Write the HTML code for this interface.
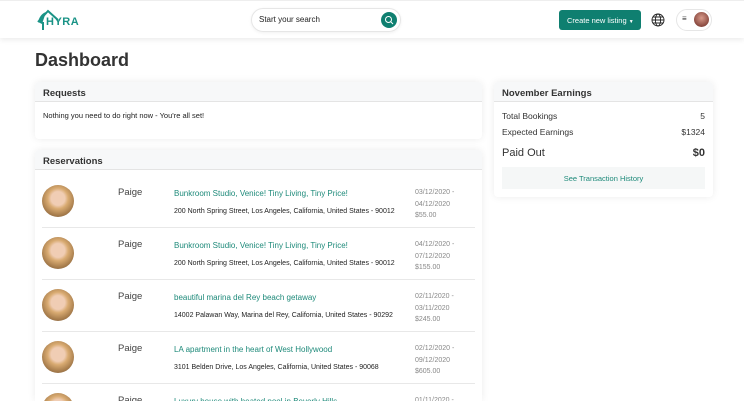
<!DOCTYPE html>
<html><head><style>
*{box-sizing:border-box;margin:0;padding:0}
html,body{width:744px;height:401px;overflow:hidden}
body{background:#fff;font-family:"Liberation Sans",sans-serif;color:#222;position:relative}
.hdr{position:absolute;left:0;top:0;width:744px;height:38px;background:#fff;box-shadow:0 2px 5px rgba(0,0,0,.08);border-top:1px solid #eee}
.abs{position:absolute}
.card{position:absolute;background:#fff;border-radius:4px;box-shadow:0 0 8px rgba(0,0,0,.08);overflow:hidden}
.ch{height:20px;background:#f7f8f9;border-bottom:1px solid #e4e4e4;font-size:9.5px;font-weight:bold;color:#333;padding:6px 8px 0}
.row{position:absolute;left:7px;width:433px;height:52px;border-bottom:1px solid #e8e8e8}
.av{position:absolute;left:0;top:9px;width:32px;height:32px;border-radius:50%;background:radial-gradient(circle at 50% 42%,#f0cdb4 0 28%,#d9ab72 42%,#a47a4a 70%,#6a5a50 100%)}
.nm{position:absolute;left:76px;top:11px;font-size:9.5px;color:#444}
.tt{position:absolute;left:132px;top:13px;font-size:8px;color:#1e8a7a}
.ad{position:absolute;left:132px;top:32px;font-size:7px;color:#222}
.dt{position:absolute;left:373px;top:11px;font-size:7px;color:#888;line-height:11.5px}
.er{position:absolute;left:8px;right:8px;font-size:8.5px;color:#333;display:flex;justify-content:space-between}
</style></head><body>
<div class="hdr">
 <svg class="abs" style="left:36px;top:7px" width="24" height="24" viewBox="0 0 24 24"><path d="M2 14 L12 3 L22 12" fill="none" stroke="#1a9386" stroke-width="2"/><path d="M2 14 Q4 6 10 4 L6 16 Z" fill="#1a9386"/><rect x="6" y="14" width="2" height="8" fill="#1a9386"/></svg>
 <div class="abs" style="left:46px;top:15px;font-size:11px;font-weight:bold;color:#1a9386;letter-spacing:.5px">HYRA</div>
 <div class="abs" style="left:251px;top:7px;width:150px;height:24px;border:1px solid #e6e6e6;border-radius:12px;box-shadow:0 1px 3px rgba(0,0,0,.06)"></div>
 <div class="abs" style="left:259px;top:14px;font-size:8px;color:#222">Start your search</div>
 <div class="abs" style="left:381px;top:11px;width:16px;height:16px;border-radius:50%;background:#0f7f70"></div>
 <svg class="abs" style="left:384px;top:14px" width="10" height="10" viewBox="0 0 10 10"><circle cx="4.5" cy="4.5" r="3" fill="none" stroke="#fff" stroke-width="1"/><path d="M6.7 6.7 L9 9" stroke="#fff" stroke-width="1"/></svg>
 <div class="abs" style="left:559px;top:9px;width:82px;height:20px;background:#0f7f70;border-radius:3px;color:#fff;font-size:7.5px;padding:6px 0 0 8px">Create new listing <span style="font-size:5px">▼</span></div>
 <svg class="abs" style="left:651px;top:12px" width="14" height="14" viewBox="0 0 14 14" fill="none" stroke="#222" stroke-width=".9"><circle cx="7" cy="7" r="6"/><ellipse cx="7" cy="7" rx="2.6" ry="6"/><path d="M1 7h12M2 4h10M2 10h10"/></svg>
 <div class="abs" style="left:676px;top:8px;width:36px;height:22px;border:1px solid #e6e6e6;border-radius:11px"></div>
 <div class="abs" style="left:682px;top:13px;font-size:8px;color:#333">≡</div>
 <div class="abs" style="left:694px;top:11px;width:15px;height:15px;border-radius:50%;background:radial-gradient(circle at 50% 40%,#d89a8a,#8a4a40 70%)"></div>
</div>
<div class="abs" style="left:35px;top:50px;font-size:18px;font-weight:bold;color:#333">Dashboard</div>
<div class="card" style="left:35px;top:82px;width:447px;height:57px"><div class="ch">Requests</div><div style="font-size:7.5px;padding:9px 8px;color:#222">Nothing you need to do right now - You're all set!</div></div>
<div class="card" style="left:35px;top:150px;width:447px;height:251px;border-radius:4px 4px 0 0"><div class="ch">Reservations</div>
 <div class="row" style="top:26px"><div class="av"></div><div class="nm">Paige</div><div class="tt">Bunkroom Studio, Venice! Tiny Living, Tiny Price!</div><div class="ad">200 North Spring Street, Los Angeles, California, United States - 90012</div><div class="dt">03/12/2020 -<br>04/12/2020<br>$55.00</div></div>
 <div class="row" style="top:78px"><div class="av"></div><div class="nm">Paige</div><div class="tt">Bunkroom Studio, Venice! Tiny Living, Tiny Price!</div><div class="ad">200 North Spring Street, Los Angeles, California, United States - 90012</div><div class="dt">04/12/2020 -<br>07/12/2020<br>$155.00</div></div>
 <div class="row" style="top:130px"><div class="av"></div><div class="nm">Paige</div><div class="tt">beautiful marina del Rey beach getaway</div><div class="ad">14002 Palawan Way, Marina del Rey, California, United States - 90292</div><div class="dt">02/11/2020 -<br>03/11/2020<br>$245.00</div></div>
 <div class="row" style="top:182px"><div class="av"></div><div class="nm">Paige</div><div class="tt">LA apartment in the heart of West Hollywood</div><div class="ad">3101 Belden Drive, Los Angeles, California, United States - 90068</div><div class="dt">02/12/2020 -<br>09/12/2020<br>$605.00</div></div>
 <div class="row" style="top:234px;height:17px;border:none;overflow:hidden"><div class="av"></div><div class="nm">Paige</div><div class="tt">Luxury house with heated pool in Beverly Hills</div><div class="dt">01/11/2020 -</div></div>
</div>
<div class="card" style="left:494px;top:82px;width:219px;height:115px"><div class="ch">November Earnings</div>
 <div class="er" style="top:29px"><span>Total Bookings</span><b style="font-weight:normal">5</b></div>
 <div class="er" style="top:45px"><span>Expected Earnings</span><span>$1324</span></div>
 <div class="er" style="top:65px;font-size:11px"><span>Paid Out</span><b>$0</b></div>
 <div class="abs" style="left:8px;top:85px;width:203px;height:22px;background:#f5f7f7;color:#1e8a7a;font-size:7.5px;text-align:center;padding-top:7px">See Transaction History</div>
</div>
</body></html>
